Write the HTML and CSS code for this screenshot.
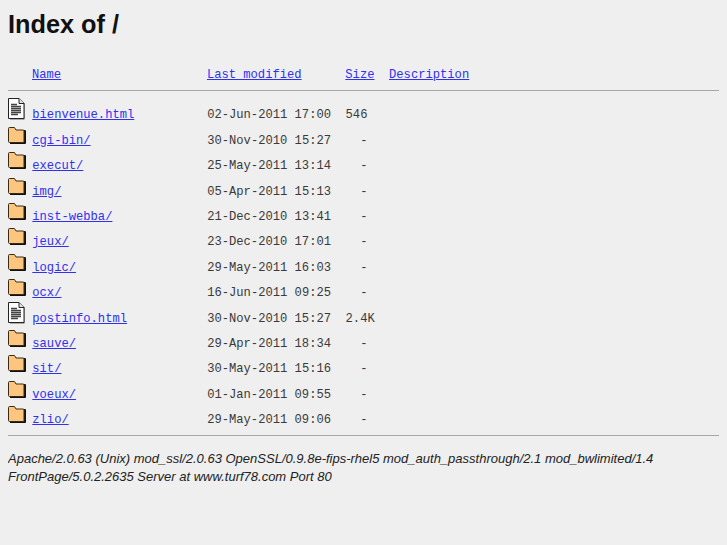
FILE: index.html
```html
<!DOCTYPE html>
<html lang="en">
<head>
    <meta charset="UTF-8">
    <title>Index of /</title>
    <link rel="stylesheet" href="styles.css">
</head>
<body>
    <svg class="icon-defs" width="0" height="0">
        <symbol id="icon-doc" viewBox="0 0 18 24">
            <path d="M2 3.500h10l4.500 4v16h-14.500z" fill="#666"/>
            <path d="M0.500 2.500h10.500l5 5v15h-15.500z" fill="#fff" stroke="#222"/>
            <path d="M11 2.500v5h5" fill="#e4e4e4" stroke="#222"/>
            <path d="M3 8.500h6M3 10.500h10M3 12.500h10M3 14.500h10M3 16.500h10M3 18.500h7" stroke="#444" stroke-width="1.400"/>
        </symbol>
        <symbol id="icon-folder" viewBox="0 0 18 24">
            <path d="M2 8h15a1 1 0 0 1 1 1v12a1 1 0 0 1-1 1h-15z" fill="#111"/>
            <path d="M0.500 6.500v13a1 1 0 0 0 1 1h13.500a1 1 0 0 0 1-1v-10.500a1 1 0 0 0-1-1h-7l-1.500-2.500h-5a1 1 0 0 0-1 1z" fill="#fdc67f" stroke="#3a2a15"/>
        </symbol>
    </svg>

    <h1>Index of /</h1>
<pre class="listing"><span class="spacer"></span><a href="#">Name</a>                    <a href="#">Last modified</a>      <a href="#">Size</a>  <a href="#">Description</a><hr class="head-rule"><svg class="icon"><use href="#icon-doc"/></svg> <a href="#">bienvenue.html</a>          02-Jun-2011 17:00  546
<svg class="icon"><use href="#icon-folder"/></svg> <a href="#">cgi-bin/</a>                30-Nov-2010 15:27    -
<svg class="icon"><use href="#icon-folder"/></svg> <a href="#">execut/</a>                 25-May-2011 13:14    -
<svg class="icon"><use href="#icon-folder"/></svg> <a href="#">img/</a>                    05-Apr-2011 15:13    -
<svg class="icon"><use href="#icon-folder"/></svg> <a href="#">inst-webba/</a>             21-Dec-2010 13:41    -
<svg class="icon"><use href="#icon-folder"/></svg> <a href="#">jeux/</a>                   23-Dec-2010 17:01    -
<svg class="icon"><use href="#icon-folder"/></svg> <a href="#">logic/</a>                  29-May-2011 16:03    -
<svg class="icon"><use href="#icon-folder"/></svg> <a href="#">ocx/</a>                    16-Jun-2011 09:25    -
<svg class="icon"><use href="#icon-doc"/></svg> <a href="#">postinfo.html</a>           30-Nov-2010 15:27  2.4K
<svg class="icon"><use href="#icon-folder"/></svg> <a href="#">sauve/</a>                  29-Apr-2011 18:34    -
<svg class="icon"><use href="#icon-folder"/></svg> <a href="#">sit/</a>                    30-May-2011 15:16    -
<svg class="icon"><use href="#icon-folder"/></svg> <a href="#">voeux/</a>                  01-Jan-2011 09:55    -
<svg class="icon"><use href="#icon-folder"/></svg> <a href="#">zlio/</a>                   29-May-2011 09:06    -
<hr class="foot-rule"></pre>
    <address>Apache/2.0.63 (Unix) mod_ssl/2.0.63 OpenSSL/0.9.8e-fips-rhel5 mod_auth_passthrough/2.1 mod_bwlimited/1.4 FrontPage/5.0.2.2635 Server at www.turf78.com Port 80</address>
</body>
</html>
```

FILE: styles.css
```css
body {
    margin: 8px;
    background: #efefef;
    color: #000;
    font-family: "Liberation Sans", Arial, sans-serif;
}

.icon-defs {
    position: absolute;
}

h1 {
    margin: 0;
    font-size: 25.3px;
    line-height: 33px;
    font-weight: bold;
    color: #111;
}

.listing {
    margin: 22px 0 0;
    font-family: "Liberation Mono", "Courier New", monospace;
    font-size: 12.15px;
    line-height: 25.4px;
    color: #3a3a3a;
}

.listing a {
    color: #3030f0;
}

.spacer {
    display: inline-block;
    width: 24px;
}

.icon {
    width: 18px;
    height: 24px;
    margin: -14px -1px 0 0;
    vertical-align: -2px;
}

hr {
    margin: 0;
    border: 0;
    border-top: 1px solid #a8a8a8;
}

.head-rule {
    margin: 2px 0 12px;
}

.foot-rule {
    margin: 1px 0 0;
}

address {
    margin-top: 14px;
    font-size: 13px;
    line-height: 18px;
    color: #222;
}
```
